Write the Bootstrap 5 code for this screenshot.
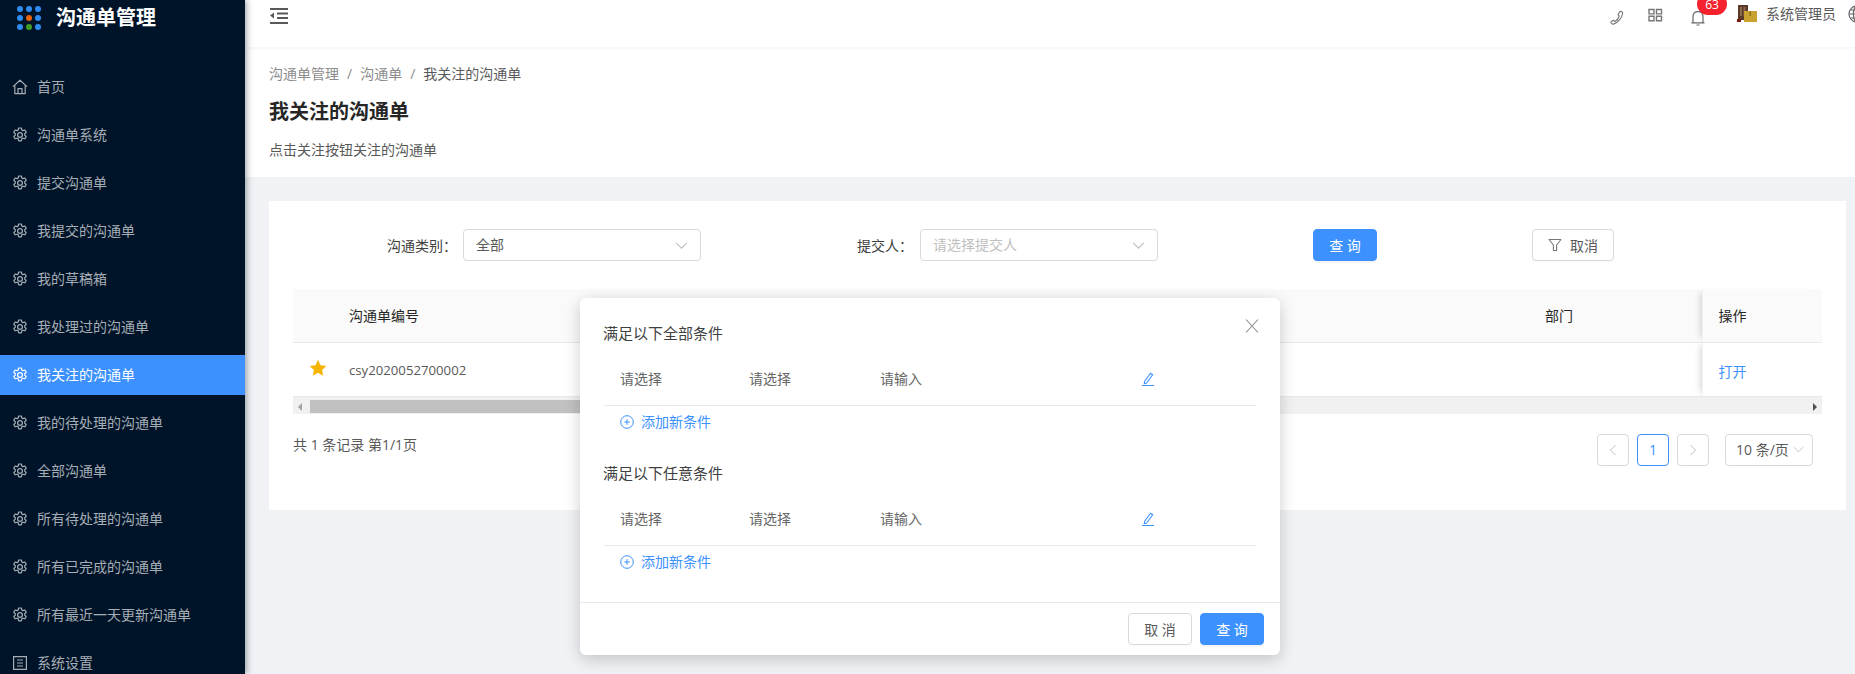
<!DOCTYPE html>
<html lang="zh-CN">
<head>
<meta charset="utf-8">
<title>我关注的沟通单</title>
<link rel="stylesheet" href="https://cdn.jsdelivr.net/npm/bootstrap@5.3.0/dist/css/bootstrap.min.css">
<style>
html,body{height:100%;overflow:hidden}
body{font-family:"Open Sans","Noto Sans CJK SC",sans-serif;font-size:14px;color:#595959;background:#f0f2f5}
.shell{height:674px;overflow:hidden;position:relative}
.side{width:245px;flex:none;background:#001429;box-shadow:2px 0 6px rgba(0,21,41,.35);z-index:3;color:#a6adb4;overflow:hidden}
.brand{height:67px;flex:none;padding:6px 0 0 17px;gap:15px;align-items:flex-start}
.brand-dots{display:grid;grid-template-columns:repeat(3,6px);gap:3px}
.brand-dots i{width:6px;height:6px;border-radius:50%;background:#2e8bf0;display:block}
.brand-dots i.o{background:#e8630a}.brand-dots i.g{background:#3f9e26}
.brand-name{font-size:20px;font-weight:700;color:#fff;line-height:20px;margin-top:2px}
.side .nav{flex:none}
.side .nav-link{height:40px;flex:none;margin-bottom:8px;padding:0 0 1px 12px;gap:9px;color:#a6adb4;font-size:14px}
.side .nav-link.active{background:#3c91ff;color:#fff}
.side svg{width:16px;height:16px;flex:none}
.mainc{min-width:0}
.topbar{height:47px;background:#fff;box-shadow:0 1px 4px rgba(0,21,41,.06);flex:none;overflow:hidden;padding:0 0 16px 25px;z-index:2;position:relative}
.tb-right{position:relative}
.tb-ic{color:#777;width:16px;height:16px;display:block}
.tb-low{margin-top:4px}
.tb-grid{margin:0 0 2px 22px}
.tb-up{margin-bottom:4px}
.bell-w{position:relative;margin:4px 0 0 27px}
.bdg{position:absolute;left:7px;top:-17px;width:30px;height:22px;border-radius:11px;background:#f5222d;color:#fff;font-size:12px;line-height:24px;text-align:center}
.tb-ava{margin-left:31px;flex:none}
.tb-name{margin-left:8px;width:70px;white-space:nowrap}
.tb-globe{margin:0 -11px 4px 12px;flex:none}
.pg-head{height:130px;background:#fff;padding:17px 24px 0;flex:none}
.pg-head .breadcrumb{margin:0;font-size:14px;line-height:20px;--bs-breadcrumb-divider-color:#8c8c8c;--bs-breadcrumb-item-active-color:#595959}
.pg-head .breadcrumb a{color:#8c8c8c;text-decoration:none}
.pg-title{font-size:20px;font-weight:700;color:#262626;line-height:28px;margin:14px 0 0}
.pg-desc{margin:14px 0 0;line-height:20px}
.panel{background:#fff;margin:24px 9px 0 24px;padding:28px 24px 44px;height:309px}
.filter{gap:155px;padding-left:94px;height:32px;align-items:center}
.f-grp{display:flex;align-items:center;color:#404040}
.f-grp1{margin-right:1px}
.f-lab{margin-right:6px;white-space:nowrap}
.f-lab2{margin-right:7px}
.f-sel{width:238px;height:32px;padding:0 12px;border:1px solid #d9d9d9;border-radius:4px;display:flex;align-items:center;justify-content:space-between;color:#595959;box-shadow:none;line-height:20px;font-size:14px}
.f-sel.ph{color:#bfbfbf}
.chev{width:13px;height:13px;color:#bfbfbf;flex:none}
.btn-q{--bs-btn-bg:#3c91ff;--bs-btn-border-color:#3c91ff;--bs-btn-color:#fff;--bs-btn-hover-bg:#3c91ff;--bs-btn-hover-color:#fff;width:64px;height:32px;padding:0;font-size:14px;border-radius:4px;box-shadow:0 2px 0 rgba(0,0,0,.04)}
.btn-c{--bs-btn-bg:#fff;--bs-btn-border-color:#d9d9d9;--bs-btn-color:#595959;--bs-btn-hover-bg:#fff;--bs-btn-hover-color:#595959;height:32px;padding:0;font-size:14px;border-radius:4px;box-shadow:0 2px 0 rgba(0,0,0,.015)}
.btn-f{width:82px;gap:8px}
.btn-f svg{width:14px;height:14px}
.tbl-wrap{margin-top:28px}
.tbl{table-layout:fixed;width:1529px;margin:0;--bs-table-color:#595959}
.tbl th,.tbl td{height:53px;padding:0 16px;border-bottom:1px solid #e8e8e8;vertical-align:middle;font-weight:400;white-space:nowrap}
.tbl td{height:54px;padding-top:4px}
.tbl th{background:#fafafa;color:#262626}
.tbl .c-op{box-shadow:-6px 0 6px -4px rgba(0,0,0,.15);border-left:1px solid #f2f2f2}
.c-no{font-size:13.2px}
.c-link{color:#3c91ff;text-decoration:none;font-size:14px}
.star{width:18px;height:18px;color:#f5b400;display:block;margin:-6px 0 0 0}
.sbar{height:17px;background:#f1f1f1;padding:3px 0}
.sb-l,.sb-r{width:0;height:0;border-top:4px solid transparent;border-bottom:4px solid transparent;flex:none;margin-top:3px}
.sb-l{border-right:4px solid #a3a3a3;margin-left:5px;margin-right:8px}
.sb-r{border-left:4px solid #505050;margin-left:auto;margin-right:5px}
.sb-th{width:900px;height:13px;background:#c1c1c1}
.foot-row{margin-top:20px;height:32px;align-items:flex-start;justify-content:space-between;padding-right:9px}
.foot-tot{line-height:22px}
.pagination{--bs-pagination-color:#bfbfbf;--bs-pagination-border-color:#d9d9d9;--bs-pagination-bg:#fff;--bs-pagination-font-size:14px;gap:8px;margin:0}
.pagination .page-link{width:32px;height:32px;padding:0;display:flex;align-items:center;justify-content:center;border-radius:4px!important;margin:0!important}
.pagination .active .page-link{background:#fff;border-color:#3c91ff;color:#3c91ff}
.pagination svg{width:12px;height:12px}
.sz-sel{width:88px;height:32px;margin-left:16px;border:1px solid #d9d9d9;border-radius:4px;padding:0 8px 0 10px;display:flex;align-items:center;justify-content:space-between;color:#595959;white-space:nowrap}
.sz-sel .chev{width:11px;height:11px}
.dlg{position:absolute;left:580px;top:298px;width:700px;height:357px;z-index:5;border:0;border-radius:6px;box-shadow:0 4px 16px rgba(0,0,0,.2);display:flex;flex-direction:column;background:#fff}
.dlg-x{position:absolute;left:664px;top:20px;width:16px;height:16px;background:none;border:0;padding:0;color:#8c8c8c}
.dlg-x svg{width:16px;height:16px;display:block}
.dlg-body{flex:1;padding:23px 24px 0;min-height:0}
.cond-t{font-size:15px;line-height:24px;color:#404040;margin:0 0 0 -1px}
.cond-row{height:50px;margin-top:11px;padding:0 16px 3px;border-bottom:1px solid #e8e8e8;align-items:center;color:#666;display:flex}
.cond-row span{flex:none;line-height:20px}
.cond-c1{width:129px}.cond-c2{width:131px}.cond-c3{width:260px}
.pen{width:16px;height:16px;color:#3c91ff}
.add-c{color:#3c91ff;height:31px;padding-left:16px;gap:7px;display:flex;align-items:center}
.add-c svg{width:14px;height:14px}
.sec2{margin-top:24px}
.dlg-foot{height:53px;border-top:1px solid #e8e8e8;padding:10px 16px 0 0;gap:8px;justify-content:flex-end;align-items:flex-start;display:flex;flex:none}
.dlg-foot .btn{width:64px}
</style>
</head>
<body>
<svg width="0" height="0" class="position-absolute">
  <symbol id="gear" viewBox="0 0 16 16"><path fill="none" stroke="currentColor" stroke-width="1.2" stroke-linejoin="round" d="M6.7 1h2.6l.5 2 1.1.6 2-.6 1.3 2.3-1.5 1.4v1.4l1.5 1.4-1.3 2.3-2-.6-1.1.6-.5 2H6.7l-.5-2-1.1-.6-2 .6-1.3-2.3 1.5-1.4V6.7L1.8 5.3 3.1 3l2 .6 1.1-.6z"/><circle cx="8" cy="8" r="2.4" fill="none" stroke="currentColor" stroke-width="1.2"/></symbol>
  <symbol id="home" viewBox="0 0 16 16"><path fill="none" stroke="currentColor" stroke-width="1.2" stroke-linejoin="round" d="M1 7.6 8 1.2l7 6.4M2.8 6.6V14.6h10.4V6.6M6 14.6V9.6h4v5"/></symbol>
  <symbol id="listb" viewBox="0 0 16 16"><path fill="none" stroke="currentColor" stroke-width="1.2" d="M1.6 1.6h12.8v12.8H1.6zM5 5h6M5 8h6M5 11h6"/></symbol>
  <symbol id="chev" viewBox="0 0 12 12"><path fill="none" stroke="currentColor" stroke-width="1" d="M1 3.5 6 8.5l5-5"/></symbol>
  <symbol id="pen" viewBox="0 0 16 16"><path fill="none" stroke="currentColor" stroke-width="1.1" stroke-linejoin="round" d="M4.5 10.5 10.5 2.2l2.2 1.6-6 8.2-2.4.8zM2 14.5h12"/></symbol>
  <symbol id="plus" viewBox="0 0 14 14"><circle cx="7" cy="7" r="6.3" fill="none" stroke="currentColor" stroke-width="1"/><path fill="none" stroke="currentColor" stroke-width="1" d="M7 4.2v5.6M4.2 7h5.6"/></symbol>
</svg>
<div class="shell d-flex">
  <aside class="side d-flex flex-column">
    <div class="brand d-flex">
      <div class="brand-dots"><i></i><i></i><i></i><i></i><i class="o"></i><i></i><i></i><i class="g"></i><i></i></div>
      <div class="brand-name">沟通单管理</div>
    </div>
    <nav class="nav flex-column flex-nowrap">
      <a class="nav-link d-flex align-items-center" href="#"><svg><use href="#home"/></svg>首页</a>
      <a class="nav-link d-flex align-items-center" href="#"><svg><use href="#gear"/></svg>沟通单系统</a>
      <a class="nav-link d-flex align-items-center" href="#"><svg><use href="#gear"/></svg>提交沟通单</a>
      <a class="nav-link d-flex align-items-center" href="#"><svg><use href="#gear"/></svg>我提交的沟通单</a>
      <a class="nav-link d-flex align-items-center" href="#"><svg><use href="#gear"/></svg>我的草稿箱</a>
      <a class="nav-link d-flex align-items-center" href="#"><svg><use href="#gear"/></svg>我处理过的沟通单</a>
      <a class="nav-link active d-flex align-items-center" href="#"><svg><use href="#gear"/></svg>我关注的沟通单</a>
      <a class="nav-link d-flex align-items-center" href="#"><svg><use href="#gear"/></svg>我的待处理的沟通单</a>
      <a class="nav-link d-flex align-items-center" href="#"><svg><use href="#gear"/></svg>全部沟通单</a>
      <a class="nav-link d-flex align-items-center" href="#"><svg><use href="#gear"/></svg>所有待处理的沟通单</a>
      <a class="nav-link d-flex align-items-center" href="#"><svg><use href="#gear"/></svg>所有已完成的沟通单</a>
      <a class="nav-link d-flex align-items-center" href="#"><svg><use href="#gear"/></svg>所有最近一天更新沟通单</a>
      <a class="nav-link d-flex align-items-center" href="#"><svg><use href="#listb"/></svg>系统设置</a>
    </nav>
  </aside>
  <div class="mainc flex-grow-1 d-flex flex-column">
    <header class="topbar d-flex align-items-center">
      <svg width="18" height="16" viewBox="0 0 18 16"><path fill="none" stroke="#595959" stroke-width="2" d="M0 1h18M7 5.5h11M7 10h11M0 15h18"/><path fill="#595959" d="M4 4.5v6L0 7.5z"/></svg>
      <div class="tb-right ms-auto d-flex align-items-center">
        <svg class="tb-ic tb-low" viewBox="0 0 16 16"><path fill="none" stroke="currentColor" stroke-width="1.1" d="M11 1.5c1.2-.6 2.8.6 2.6 2-.6 4.2-4.8 9.4-9 10.6-1.4.3-2.9-1-2.6-2.3l2.4-1.6 1.5 1.3c1.9-1 3.7-3.2 4.3-5.5L9 4.7z"/></svg>
        <svg class="tb-ic tb-grid" viewBox="0 0 16 16"><path fill="none" stroke="currentColor" stroke-width="1.4" d="M2 2.5h5v4.4H2zM9.5 2.5h5v4.4h-5zM2 9.3h5v4.4H2zM9.5 9.3h5v4.4h-5z"/></svg>
        <div class="bell-w">
          <svg class="tb-ic" viewBox="0 0 16 16"><path fill="none" stroke="#666" stroke-width="1.2" d="M3 12.8V6.6C3 3.6 5 1.6 8 1.6s5 2 5 5v6.2M1.5 12.8h13M6.5 15h3"/></svg>
          <span class="bdg">63</span>
        </div>
        <svg class="tb-ava tb-up" width="21" height="18" viewBox="0 0 21 18"><path fill="#5b3a28" d="M1 0h10v15H1z"/><path fill="#8b6a4a" d="M3 2h2v9H3zM6.5 2h2v9h-2z"/><path fill="#7a1b12" d="M0 14h4v3H0z"/><path fill="#c9a22f" d="M7 6h13v11H7z"/><path fill="#8d701b" d="M12.5 6h1.4v5h-1.4z"/></svg>
        <span class="tb-name tb-up">系统管理员</span>
        <svg class="tb-globe" width="18" height="18" viewBox="0 0 18 18"><g fill="none" stroke="#666" stroke-width="1.2"><circle cx="9" cy="9" r="8"/><ellipse cx="9" cy="9" rx="3.6" ry="8"/><path d="M1 9h16M2.5 5h13M2.5 13h13"/></g></svg>
      </div>
    </header>
    <section class="pg-head">
      <nav aria-label="breadcrumb"><ol class="breadcrumb">
        <li class="breadcrumb-item"><a href="#">沟通单管理</a></li>
        <li class="breadcrumb-item"><a href="#">沟通单</a></li>
        <li class="breadcrumb-item active">我关注的沟通单</li>
      </ol></nav>
      <h1 class="pg-title">我关注的沟通单</h1>
      <p class="pg-desc">点击关注按钮关注的沟通单</p>
    </section>
    <section class="panel">
      <div class="filter d-flex">
        <div class="f-grp f-grp1"><span class="f-lab">沟通类别：</span><div class="f-sel form-control">全部<svg class="chev"><use href="#chev"/></svg></div></div>
        <div class="f-grp"><span class="f-lab f-lab2">提交人：</span><div class="f-sel ph form-control">请选择提交人<svg class="chev"><use href="#chev"/></svg></div></div>
        <button class="btn btn-q" type="button">查 询</button>
        <button class="btn btn-c btn-f d-flex align-items-center justify-content-center" type="button"><svg viewBox="0 0 14 14"><path fill="none" stroke="#777" stroke-width="1.1" stroke-linejoin="round" d="M1 1.5h12L8.6 7v5.5H5.4V7z"/></svg>取消</button>
      </div>
      <div class="tbl-wrap">
        <table class="table tbl">
          <colgroup><col style="width:40px"><col style="width:1196px"><col style="width:173px"><col style="width:120px"></colgroup>
          <thead><tr><th></th><th>沟通单编号</th><th>部门</th><th class="c-op">操作</th></tr></thead>
          <tbody><tr>
            <td><svg class="star" viewBox="0 0 18 18"><path fill="currentColor" d="M9 .8l2.5 5.4 5.9.7-4.4 4 1.2 5.8L9 13.8l-5.2 2.9L5 10.9.6 6.9l5.9-.7z"/></svg></td>
            <td class="c-no">csy2020052700002</td><td></td><td class="c-op"><a class="c-link" href="#">打开</a></td>
          </tr></tbody>
        </table>
        <div class="sbar d-flex"><span class="sb-l"></span><span class="sb-th"></span><span class="sb-r"></span></div>
      </div>
      <div class="foot-row d-flex">
        <span class="foot-tot">共 1 条记录 第1/1页</span>
        <div class="d-flex">
          <ul class="pagination">
            <li class="page-item"><a class="page-link" href="#"><svg viewBox="0 0 12 12"><path fill="none" stroke="currentColor" d="M8.5 1 3.5 6l5 5"/></svg></a></li>
            <li class="page-item active"><a class="page-link" href="#">1</a></li>
            <li class="page-item"><a class="page-link" href="#"><svg viewBox="0 0 12 12"><path fill="none" stroke="currentColor" d="M3.5 1l5 5-5 5"/></svg></a></li>
          </ul>
          <div class="sz-sel">10 条/页<svg class="chev"><use href="#chev"/></svg></div>
        </div>
      </div>
    </section>
  </div>
  <div class="dlg modal-content">
    <button class="dlg-x" type="button" aria-label="关闭"><svg viewBox="0 0 16 16"><path fill="none" stroke="currentColor" stroke-width="1.1" d="M2 1.5 14 14.5M14 1.5 2 14.5"/></svg></button>
    <div class="dlg-body">
      <h6 class="cond-t fw-normal">满足以下全部条件</h6>
      <div class="cond-row"><span class="cond-c1">请选择</span><span class="cond-c2">请选择</span><span class="cond-c3">请输入</span><svg class="pen"><use href="#pen"/></svg></div>
      <div class="add-c"><svg><use href="#plus"/></svg>添加新条件</div>
      <h6 class="cond-t fw-normal sec2">满足以下任意条件</h6>
      <div class="cond-row"><span class="cond-c1">请选择</span><span class="cond-c2">请选择</span><span class="cond-c3">请输入</span><svg class="pen"><use href="#pen"/></svg></div>
      <div class="add-c"><svg><use href="#plus"/></svg>添加新条件</div>
    </div>
    <div class="dlg-foot">
      <button class="btn btn-c" type="button">取 消</button>
      <button class="btn btn-q" type="button">查 询</button>
    </div>
  </div>
</div>
<script src="https://cdn.jsdelivr.net/npm/bootstrap@5.3.0/dist/js/bootstrap.bundle.min.js"></script>
</body>
</html>
